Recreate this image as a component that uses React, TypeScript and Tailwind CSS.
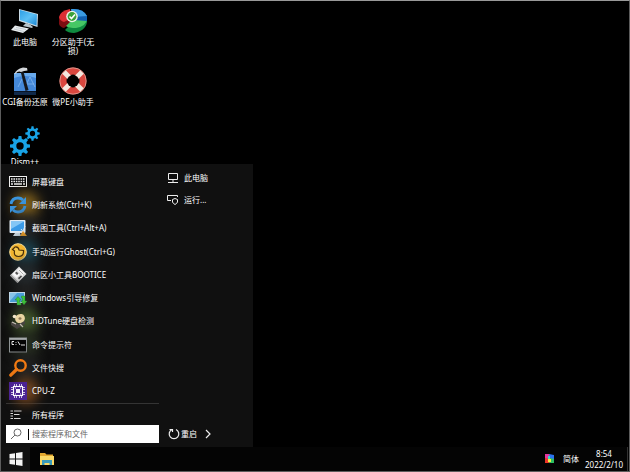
import type { ReactNode } from "react";

function PcIcon() {
  return (
    <svg viewBox="0 0 28 26" className="h-[26px] w-7" aria-hidden="true">
      <defs>
        <linearGradient id="screen" x1="0" y1="0" x2="1" y2="1">
          <stop offset="0" stopColor="#2d9fe6" />
          <stop offset="0.5" stopColor="#5cc0f5" />
          <stop offset="1" stopColor="#1c86d2" />
        </linearGradient>
      </defs>
      <path d="M8 1 L27 6 L26.500 19 L8 13Z" fill="#c9dbe6" />
      <path d="M9 2 L26 6.500 L25.500 17.500 L9 12Z" fill="url(#screen)" />
      <path d="M15 15 L19 16.500 L22 19 L21 20 L12 18Z" fill="#b8c4ca" />
      <path d="M4 17.500 L18 20.500 L12 25 L0 22Z" fill="#e8edf0" />
      <path d="M5 19.500 L15 21.500 M3 21 L13 23.500" stroke="#aab4ba" strokeWidth="0.600" />
    </svg>
  );
}

function PartitionIcon() {
  return (
    <svg viewBox="0 0 30 26" className="h-[26px] w-[30px]" aria-hidden="true">
      <path d="M1 9 V16 Q2 19 6 20 L13 15 V9Z" fill="#7c0d12" />
      <path d="M15 11 L29 11 Q30 22 16 25 Q10 25 7 22 L15 14Z" fill="#0f8a40" />
      <path d="M15 11 L29 10 Q29 18 18 20 Q11 20 8 18Z" fill="#46c765" />
      <path d="M1 9 Q2 3 12 1 L14 10 L6 14 Q2 13 1 9Z" fill="#dc2e34" />
      <path d="M13 1 Q25 0 29 8 L29 13 L16 12Z" fill="#1261b0" />
      <path d="M13 1 Q25 0 29 8 L15 9Z" fill="#3b9ce2" />
      <circle cx="14" cy="8.500" r="5.800" fill="#edf3ea" />
      <circle cx="14" cy="8.500" r="4.400" fill="#3ba13a" />
      <path d="M11.500 8.500 L13.500 10.500 L17 6.500" fill="none" stroke="#fff" strokeWidth="1.600" />
    </svg>
  );
}

function BackupIcon() {
  return (
    <svg viewBox="0 0 28 28" className="h-7 w-7" aria-hidden="true">
      <path d="M3 6 H25 V24 H3Z" fill="#4488d8" />
      <path d="M3 11 Q14 7 25 11 V6 H3Z" fill="#69aaed" />
      <path d="M14 20 L19 10 L24 20 M15 17 H23 M7 20 L11 12" stroke="#8bbdf0" strokeWidth="0.700" fill="none" />
      <path d="M3 24.500 H25 V28 H3Z" fill="#10294a" />
      <path d="M9.500 4 L12 3 L17.500 23 L14.500 24Z" fill="#15181d" />
      <path d="M3.500 7 Q5 2 12 0.500 L16 1 L16.500 3.500 L13 4 L10 5 Q7 3.500 4.500 7Z" fill="#d3d6da" />
    </svg>
  );
}

function LifebuoyIcon() {
  return (
    <svg viewBox="0 0 28 28" className="h-7 w-7" aria-hidden="true">
      <circle cx="14" cy="14" r="10" fill="none" stroke="#d9473f" strokeWidth="7" />
      <path
        d="M5 5 L11 11 M23 5 L17 11 M23 23 L17 17 M5 23 L11 17"
        stroke="#f3e8df"
        strokeWidth="5"
      />
      <circle cx="14" cy="14" r="13.200" fill="none" stroke="#e8c9bf" strokeWidth="0.600" />
      <circle cx="14" cy="14" r="6" fill="#000000" />
    </svg>
  );
}

const teeth = [0, 45, 90, 135, 180, 225, 270, 315];

function Gear({ x, y, scale }: { x: number; y: number; scale: number }) {
  return (
    <g transform={`translate(${x} ${y}) scale(${scale})`} fill="#18a3e6">
      {teeth.map((a) => (
        <path key={a} d="M-2 -6 L-1.400 -10 H1.400 L2 -6Z" transform={`rotate(${a})`} />
      ))}
      <circle r="5.500" fill="none" stroke="#18a3e6" strokeWidth="3.600" />
    </g>
  );
}

function GearsIcon() {
  return (
    <svg viewBox="0 0 30 30" className="h-[30px] w-[30px]" aria-hidden="true">
      <Gear x={10} y={20} scale={1} />
      <Gear x={22.5} y={7.5} scale={0.72} />
    </svg>
  );
}

function KeyboardIcon() {
  return (
    <svg viewBox="0 0 18 18" className="h-[18px] w-[18px]" aria-hidden="true">
      <rect x="0.500" y="3.500" width="17" height="10" fill="#050505" stroke="#f0f0f0" />
      <path d="M2 6 H16 M2 8.500 H16" stroke="#f0f0f0" strokeWidth="1.600" strokeDasharray="1.600 0.800" />
      <path d="M2 11 H4 M5 11 H13 M14 11 H16" stroke="#f0f0f0" strokeWidth="1.600" />
    </svg>
  );
}

function RefreshIcon() {
  return (
    <svg viewBox="0 0 18 18" className="h-[18px] w-[18px]" aria-hidden="true">
      <path d="M2 8 Q3 2 9 2 Q12 2 14 4" fill="none" stroke="#3a94dc" strokeWidth="2.800" />
      <path d="M17 1 V8 H10Z" fill="#3a94dc" />
      <path d="M16 10 Q15 16 9 16 Q6 16 4 14" fill="none" stroke="#3a94dc" strokeWidth="2.800" />
      <path d="M1 17 V10 H8Z" fill="#3a94dc" />
    </svg>
  );
}

function CaptureIcon() {
  return (
    <svg viewBox="0 0 18 18" className="h-[18px] w-[18px]" aria-hidden="true">
      <rect x="0.500" y="1" width="16" height="13" rx="1" fill="#e4edf5" />
      <rect x="2" y="2.500" width="13" height="9.500" fill="#3b9be8" />
      <path d="M2 2.500 H15 L2 10Z" fill="#83c6f6" />
      <path d="M6 14 H11 L12 17 H4Z" fill="#cbd6df" />
      <path d="M12 10 L16 15 M16 7 L13 15" stroke="#e7eef3" strokeWidth="1" />
      <path d="M11 17 L14 12 L18 17Z" fill="#eb9a22" />
    </svg>
  );
}

function GhostIcon() {
  return (
    <svg viewBox="0 0 18 18" className="h-[18px] w-[18px]" aria-hidden="true">
      <circle cx="9" cy="9" r="8.300" fill="#f3b52e" stroke="#f7dd94" strokeWidth="1" />
      <path d="M3.500 6.500 L6 4 Q9.500 3.500 10 7 L14.500 7.500 Q15 13.500 9.500 13.500 Q4.500 13.500 5.500 8Z" fill="#f8c94c" stroke="#493009" strokeWidth="1.200" />
    </svg>
  );
}

function FloppyIcon() {
  return (
    <svg viewBox="0 0 18 18" className="h-[18px] w-[18px]" aria-hidden="true">
      <path d="M10 0.500 L17.500 8 L8.500 17 L1 9.500Z" fill="#dcdcdc" />
      <path d="M3.500 8 L7 4.500 L11 8.500 L7.500 12Z" fill="#fafafa" />
      <path d="M6 7 L7.500 5.500 L9.500 7.500 L8 9Z" fill="#555555" />
      <path d="M10.500 2 L16 7.500 L13.500 10 L8 4.500Z" fill="#f4f4f4" />
      <path d="M10 4 L14.500 8.500" stroke="#9b9b9b" strokeWidth="0.800" />
      <path d="M9 12 L12 9.500 L13 10.500 L10 13.500Z" fill="#444444" />
      <path d="M1 9.500 L8.500 17 L9.500 16 L2 8.500Z" fill="#9a9a9a" />
    </svg>
  );
}

function BootRepairIcon() {
  return (
    <svg viewBox="0 0 18 18" className="h-[18px] w-[18px]" aria-hidden="true">
      <rect x="0" y="3" width="16" height="11" fill="#bcd6e8" />
      <rect x="1" y="4" width="14" height="9" fill="#4a9fd8" />
      <path d="M1 12 L8 4 H1Z" fill="#87c4e8" />
      <path
        d="M6 11 L9 7.500 L12 11 H10.500 V14 H12 V16 H8 V11Z M12 12 H13.500 V9 H12.500 V7 H16 V12 H18 L15 16Z"
        fill="#3ecb3c"
        stroke="#1d7a2a"
        strokeWidth="0.400"
      />
    </svg>
  );
}

function DiskIcon() {
  return (
    <svg viewBox="0 0 18 18" className="h-[18px] w-[18px]" aria-hidden="true">
      <path d="M2 10 L9 12 L16 9 V12 L8 17 L2 13Z" fill="#494542" />
      <ellipse cx="11" cy="6.500" rx="5" ry="4.500" transform="rotate(-25 11 6.500)" fill="#ead5a2" />
      <ellipse cx="11" cy="6.500" rx="1.500" ry="1.200" fill="#8d7854" />
      <circle cx="5.500" cy="4.500" r="1.800" fill="#f1e4c8" />
      <path d="M3 10 L7 12 M11 12 L14 15" stroke="#c9c3b7" strokeWidth="1.200" />
    </svg>
  );
}

function ConsoleIcon() {
  return (
    <svg viewBox="0 0 18 18" className="h-[18px] w-[18px]" aria-hidden="true">
      <rect x="0.500" y="2" width="17" height="14" fill="#050505" stroke="#8f9496" />
      <path d="M1 3 H17" stroke="#c5c9ca" strokeWidth="1.500" />
      <path d="M5 5.500 H3 V8.500 H5 M7 6 V6.800 M7 8 V8.800 M9 5.500 L11 9 M12 9 H16" stroke="#fff" strokeWidth="0.900" fill="none" />
    </svg>
  );
}

function FileSearchIcon() {
  return (
    <svg viewBox="0 0 18 18" className="h-[18px] w-[18px]" aria-hidden="true">
      <circle cx="11.500" cy="6.500" r="5.200" fill="none" stroke="#f27a13" strokeWidth="2.400" />
      <path d="M7.500 10.500 L1.800 16.200" stroke="#f27a13" strokeWidth="3.200" strokeLinecap="round" />
    </svg>
  );
}

function CpuIcon() {
  return (
    <svg viewBox="0 0 18 18" className="h-[18px] w-[18px]" aria-hidden="true">
      <rect width="18" height="18" fill="#4b2393" />
      <path d="M5.500 2 V16 M7.500 2 V16 M10.500 2 V16 M12.500 2 V16 M2 5.500 H16 M2 7.500 H16 M2 10.500 H16 M2 12.500 H16" stroke="#e0d5f2" strokeWidth="0.900" />
      <rect x="4.500" y="4.500" width="9" height="9" fill="#4b2393" stroke="#fff" strokeWidth="1.100" />
      <rect x="7" y="7" width="4" height="4" fill="#f4effc" />
      <path d="M6 6 H7 M11 6 H12 M6 12 H7 M11 12 H12" stroke="#f4effc" strokeWidth="1" />
    </svg>
  );
}

function DesktopItem({ icon, label }: { icon: ReactNode; label: string }) {
  return (
    <button type="button" className="flex w-12 flex-col items-center text-center">
      <span className="flex h-8 items-center justify-center">{icon}</span>
      <span className="w-full leading-[9px] [text-shadow:0_1px_1px_#000]">{label}</span>
    </button>
  );
}

const programs: { label: string; icon: ReactNode; glow: string }[] = [
  { label: "屏幕键盘", icon: <KeyboardIcon />, glow: "bg-transparent" },
  { label: "刷新系统(Ctrl+K)", icon: <RefreshIcon />, glow: "bg-[#80601c]" },
  { label: "截图工具(Ctrl+Alt+A)", icon: <CaptureIcon />, glow: "bg-[#252525]" },
  { label: "手动运行Ghost(Ctrl+G)", icon: <GhostIcon />, glow: "bg-[#1c424e]" },
  { label: "扇区小工具BOOTICE", icon: <FloppyIcon />, glow: "bg-[#252b2e]" },
  { label: "Windows引导修复", icon: <BootRepairIcon />, glow: "bg-[#222222]" },
  { label: "HDTune硬盘检测", icon: <DiskIcon />, glow: "bg-[#42582b]" },
  { label: "命令提示符", icon: <ConsoleIcon />, glow: "bg-[#283021]" },
  { label: "文件快搜", icon: <FileSearchIcon />, glow: "bg-[#222222]" },
  { label: "CPU-Z", icon: <CpuIcon />, glow: "bg-[#73451f]" },
];

function StartMenu() {
  return (
    <nav aria-label="开始菜单" className="absolute bottom-0 left-0 flex w-[252px] bg-[#101010]">
      <div className="flex w-[159px] flex-col pt-[6px] pr-px pl-[5px]">
        <ul className="grid h-[233px] grid-rows-10">
          {programs.map((p) => (
            <li key={p.label} className="flex">
              <button type="button" className="flex w-full items-center gap-[5px] pl-[3px] text-left">
                <span className="relative">
                  <span className={`absolute -inset-1 translate-x-2 rounded-full blur-[6px] ${p.glow}`} />
                  <span className="relative block">{p.icon}</span>
                </span>
                <span className="relative">{p.label}</span>
              </button>
            </li>
          ))}
        </ul>
        <button type="button" className="flex h-[22px] items-center gap-[10px] border-t border-[#343434] pl-1">
          <svg viewBox="0 0 12 10" className="h-[10px] w-3" fill="none" stroke="#d8d8d8" aria-hidden="true">
            <path d="M0.500 1 H3 M0.500 3.500 H3 M0.500 6 H3 M0.500 8.500 H3 M4 1 H11.500 M4 4.500 H9.500 M4 8.500 H10.500" />
          </svg>
          <span>所有程序</span>
        </button>
        <label className="mb-1 flex h-[18px] items-center bg-white pl-1">
          <svg viewBox="0 0 12 12" className="mr-[6px] h-3 w-3 shrink-0" fill="none" stroke="#666" aria-hidden="true">
            <circle cx="7.500" cy="4.500" r="3.500" />
            <path d="M5 7 L1 11" />
          </svg>
          <span className="h-[11px] w-px shrink-0 bg-black" />
          <input
            type="text"
            aria-label="搜索"
            placeholder="搜索程序和文件"
            className="w-full min-w-0 bg-transparent pl-[3px] text-black outline-none placeholder:text-[#666666]"
          />
        </label>
      </div>
      <div className="flex flex-1 flex-col pt-[3px] pl-[7px]">
        <button type="button" className="flex h-[22px] w-full items-center gap-[5px] text-left">
          <svg viewBox="0 0 12 12" className="h-3 w-3" fill="none" stroke="#eeeeee" aria-hidden="true">
            <path d="M1.500 1.500 H10.500 V7.500 H1.500Z M6 8 V10 M1 10.500 H11" />
          </svg>
          <span>此电脑</span>
        </button>
        <button type="button" className="flex h-[22px] w-full items-center gap-[5px] text-left">
          <svg viewBox="0 0 12 12" className="h-3 w-3" fill="none" stroke="#eeeeee" aria-hidden="true">
            <path d="M4 6.500 H0.500 V1.500 H10.500 V3 M5.500 5.500 L8 4.500 L10.500 5.500 V8 Q10 9.500 8 10.500 Q6 9.500 5.500 8Z" />
          </svg>
          <span>运行...</span>
        </button>
        <div className="mt-auto flex h-[26px] items-center gap-2 pl-px">
          <button type="button" className="flex items-center gap-px">
            <svg viewBox="0 0 12 12" className="h-3 w-3" fill="none" stroke="#eeeeee" strokeWidth="1.200" aria-hidden="true">
              <path d="M4 1.500 A4.800 4.800 0 1 0 8 1.500 M1.500 1.500 H4.500 V4" />
            </svg>
            <span>重启</span>
          </button>
          <button type="button" aria-label="更多电源选项">
            <svg viewBox="0 0 6 10" className="h-[10px] w-[6px]" fill="none" stroke="#eeeeee" strokeWidth="1.200" aria-hidden="true">
              <path d="M1 1 L5 5 L1 9" />
            </svg>
          </button>
        </div>
      </div>
    </nav>
  );
}

function Taskbar() {
  return (
    <footer className="flex h-6 shrink-0 items-center bg-[#040404]">
      <button type="button" aria-label="开始" className="flex h-full w-[29px] items-center justify-center bg-[#111111]">
        <svg viewBox="0 0 14 14" className="h-[14px] w-[14px]" fill="#f4f4f4" aria-hidden="true">
          <path d="M0.500 2 L6 1.200 V6.500 H0.500Z M7 1 L13.500 0 V6.500 H7Z M0.500 7.500 H6 V12.800 L0.500 12Z M7 7.500 H13.500 V14 L7 13Z" />
        </svg>
      </button>
      <button type="button" aria-label="文件资源管理器" className="ml-[9px]">
        <svg viewBox="0 0 16 14" className="h-[14px] w-4" aria-hidden="true">
          <path d="M1 1 H6 L7.500 2.500 H14 V12 H1Z" fill="#e4a82f" />
          <path d="M1 4 H15 V13 H1Z" fill="#fbd967" />
          <path d="M3 13 V8 H13 V13 H10.500 V11 H5.500 V13Z" fill="#3a9bbb" />
        </svg>
      </button>
      <div className="ml-auto flex h-full items-center">
        <svg viewBox="0 0 10 10" className="mr-2 h-[10px] w-[10px]" aria-hidden="true">
          <path d="M0 0 H5 V5 H0Z" fill="#e5359b" />
          <path d="M4 0 L9 1 V5 H5Z" fill="#2b73ef" />
          <path d="M0 4 L5 5 V9 H0Z" fill="#ed3528" />
          <path d="M5 4 L9 5 V9 H4Z" fill="#2cbf62" />
          <path d="M3 2 H5 V5 H3Z" fill="#36d9d1" />
          <path d="M3 5 H6 V8 H3Z" fill="#f2ec45" />
        </svg>
        <button type="button" className="mr-[6px]">简体</button>
        <time dateTime="2022-02-10T08:54" className="pr-1 text-center leading-[11px]">
          <span className="block">8:54</span>
          <span className="block">2022/2/10</span>
        </time>
        <span className="mr-px h-full w-px bg-[#333333]" />
      </div>
    </footer>
  );
}

export default function App() {
  return (
    <main className="flex h-screen flex-col border border-[#5c5c5c] border-t-[#999999] bg-black font-['Noto_Sans','Noto_Sans_CJK_SC',sans-serif] text-[8px] leading-[10px] text-white">
      <section aria-label="桌面" className="relative min-h-0 flex-1 overflow-hidden">
        <div className="grid w-24 grid-cols-2 auto-rows-[60px] pt-1">
          <DesktopItem icon={<PcIcon />} label="此电脑" />
          <DesktopItem icon={<PartitionIcon />} label="分区助手(无损)" />
          <DesktopItem icon={<BackupIcon />} label="CGI备份还原" />
          <DesktopItem icon={<LifebuoyIcon />} label="微PE小助手" />
          <DesktopItem icon={<GearsIcon />} label="Dism++" />
        </div>
        <StartMenu />
      </section>
      <Taskbar />
    </main>
  );
}
